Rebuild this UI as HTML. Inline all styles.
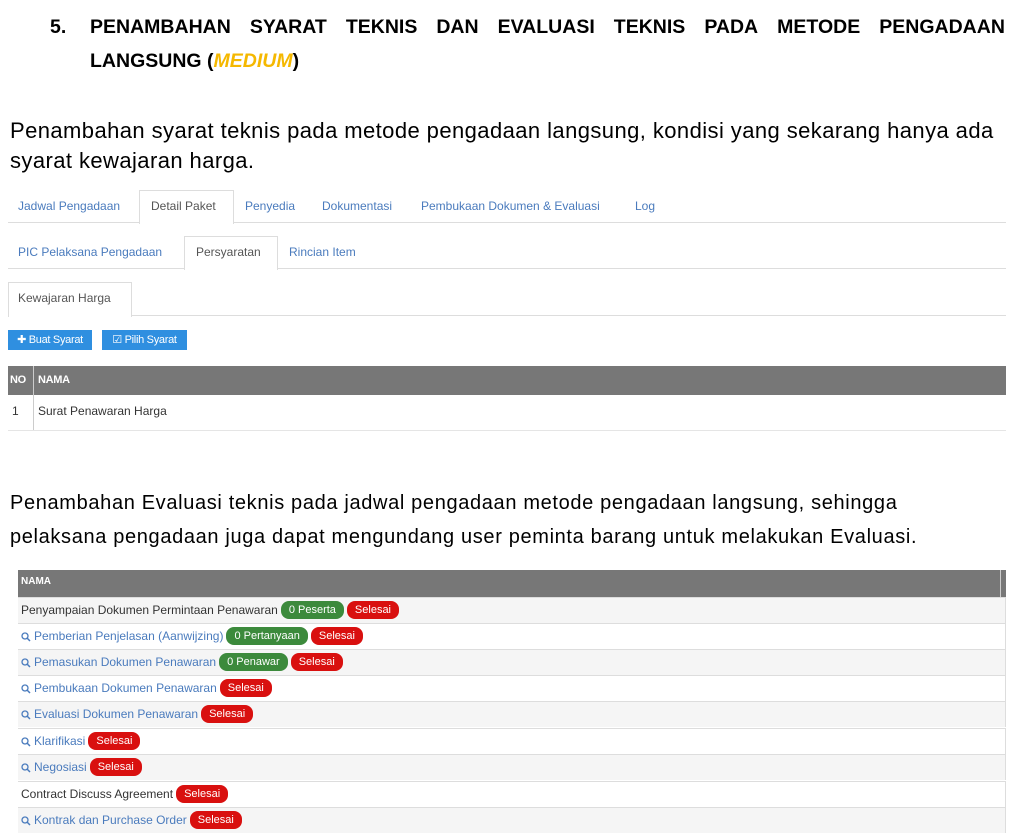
<!DOCTYPE html>
<html><head><meta charset="utf-8"><style>
body{margin:0;width:1016px;height:840px;background:#fff;position:relative;overflow:hidden;font-family:"Liberation Sans",sans-serif;}
.a{position:absolute;white-space:nowrap}
.h{font-weight:bold;font-size:19.5px;color:#000}
.p{font-size:22px;color:#000;letter-spacing:0.42px}
.p2{font-size:20px;color:#000;letter-spacing:0.65px}
.t{font-size:12px;color:#4a7bbd;letter-spacing:0px}
.tab{position:absolute;border:1px solid #ddd;border-bottom:none;background:#fff}
.line{position:absolute;height:1px;background:#ddd}
.lab{display:inline-block;color:#fff;font-size:11px;line-height:14px;border-radius:8px;padding:2px 8px;margin-left:3px;vertical-align:1px}
.r{background:#d9100f}.g{background:#3c8a3c}
.row{position:absolute;left:18px;width:988px;height:26px;border-top:1px solid #ddd;font-size:12px;line-height:25px;color:#333;letter-spacing:0px;white-space:nowrap;padding-left:3px;box-sizing:border-box;border-right:1px solid #ddd}
.row.s{background:#f5f5f5}
.lk{color:#4a7bbd}
.lk svg{vertical-align:-2px;margin-right:3px}
</style></head><body>
<div class="a h" style="left:50px;top:16px">5.</div>
<div class="a h" style="left:90px;top:16px;width:915px;display:flex;justify-content:space-between"><span>PENAMBAHAN</span><span>SYARAT</span><span>TEKNIS</span><span>DAN</span><span>EVALUASI</span><span>TEKNIS</span><span>PADA</span><span>METODE</span><span>PENGADAAN</span></div>
<div class="a h" style="left:90px;top:50px">LANGSUNG (<i style="color:#f5b800">MEDIUM</i>)</div>
<div class="a p" style="left:10px;top:118px">Penambahan syarat teknis pada metode pengadaan langsung, kondisi yang sekarang hanya ada</div>
<div class="a p" style="left:10px;top:148px">syarat kewajaran harga.</div>

<div class="line" style="left:8px;top:222px;width:998px"></div>
<div class="tab" style="left:139px;top:190px;width:93px;height:33px"></div>
<div class="a t" style="left:18px;top:199px">Jadwal Pengadaan</div>
<div class="a t" style="left:151px;top:199px;color:#555">Detail Paket</div>
<div class="a t" style="left:245px;top:199px">Penyedia</div>
<div class="a t" style="left:322px;top:199px">Dokumentasi</div>
<div class="a t" style="left:421px;top:199px">Pembukaan Dokumen &amp; Evaluasi</div>
<div class="a t" style="left:635px;top:199px">Log</div>

<div class="line" style="left:8px;top:268px;width:998px"></div>
<div class="tab" style="left:184px;top:236px;width:92px;height:33px"></div>
<div class="a t" style="left:18px;top:245px">PIC Pelaksana Pengadaan</div>
<div class="a t" style="left:196px;top:245px;color:#555">Persyaratan</div>
<div class="a t" style="left:289px;top:245px">Rincian Item</div>

<div class="line" style="left:8px;top:315px;width:998px"></div>
<div class="tab" style="left:8px;top:282px;width:122px;height:34px"></div>
<div class="a t" style="left:18px;top:291px;color:#555">Kewajaran Harga</div>

<div class="a" style="left:8px;top:330px;width:84px;height:20px;background:#2f8fe0;color:#fff;font-size:11px;line-height:20px;text-align:center;letter-spacing:-0.3px">✚ Buat Syarat</div>
<div class="a" style="left:102px;top:330px;width:85px;height:20px;background:#2f8fe0;color:#fff;font-size:11px;line-height:20px;text-align:center;letter-spacing:-0.3px">☑ Pilih Syarat</div>

<div class="a" style="left:8px;top:366px;width:998px;height:29px;background:#777"></div>
<div class="a" style="left:33px;top:366px;width:1px;height:64px;background:#ccc"></div>
<div class="a" style="left:10px;top:374px;color:#fff;font-size:11px;font-weight:bold;letter-spacing:-0.3px">NO</div>
<div class="a" style="left:38px;top:374px;color:#fff;font-size:11px;font-weight:bold;letter-spacing:-0.3px">NAMA</div>
<div class="a" style="left:12px;top:404px;font-size:12px;color:#333">1</div>
<div class="a" style="left:38px;top:404px;font-size:12px;color:#333">Surat Penawaran Harga</div>
<div class="line" style="left:8px;top:430px;width:998px;background:#e5e5e5"></div>

<div class="a p2" style="left:10px;top:492px">Penambahan Evaluasi teknis pada jadwal pengadaan metode pengadaan langsung, sehingga</div>
<div class="a p2" style="left:10px;top:526px">pelaksana pengadaan juga dapat mengundang user peminta barang untuk melakukan Evaluasi.</div>

<div class="a" style="left:18px;top:570px;width:988px;height:27px;background:#777"></div>
<div class="a" style="left:21px;top:576px;color:#fff;font-size:10px;font-weight:bold">NAMA</div>
<div class="a" style="left:1000px;top:570px;width:1px;height:27px;background:#ccc"></div>
<div class="row s" style="top:597px">Penyampaian Dokumen Permintaan Penawaran<span class="lab g">0 Peserta</span><span class="lab r">Selesai</span></div>
<div class="row" style="top:623px"><span class="lk"><svg width="10" height="10" viewBox="0 0 10 10"><circle cx="4" cy="4" r="3" fill="none" stroke="#4a7bbd" stroke-width="1.3"/><path d="M6 6L9 9" stroke="#4a7bbd" stroke-width="1.5"/></svg>Pemberian Penjelasan (Aanwijzing)</span><span class="lab g">0 Pertanyaan</span><span class="lab r">Selesai</span></div>
<div class="row s" style="top:649px"><span class="lk"><svg width="10" height="10" viewBox="0 0 10 10"><circle cx="4" cy="4" r="3" fill="none" stroke="#4a7bbd" stroke-width="1.3"/><path d="M6 6L9 9" stroke="#4a7bbd" stroke-width="1.5"/></svg>Pemasukan Dokumen Penawaran</span><span class="lab g">0 Penawar</span><span class="lab r">Selesai</span></div>
<div class="row" style="top:675px"><span class="lk"><svg width="10" height="10" viewBox="0 0 10 10"><circle cx="4" cy="4" r="3" fill="none" stroke="#4a7bbd" stroke-width="1.3"/><path d="M6 6L9 9" stroke="#4a7bbd" stroke-width="1.5"/></svg>Pembukaan Dokumen Penawaran</span><span class="lab r">Selesai</span></div>
<div class="row s" style="top:701px"><span class="lk"><svg width="10" height="10" viewBox="0 0 10 10"><circle cx="4" cy="4" r="3" fill="none" stroke="#4a7bbd" stroke-width="1.3"/><path d="M6 6L9 9" stroke="#4a7bbd" stroke-width="1.5"/></svg>Evaluasi Dokumen Penawaran</span><span class="lab r">Selesai</span></div>
<div class="row" style="top:728px"><span class="lk"><svg width="10" height="10" viewBox="0 0 10 10"><circle cx="4" cy="4" r="3" fill="none" stroke="#4a7bbd" stroke-width="1.3"/><path d="M6 6L9 9" stroke="#4a7bbd" stroke-width="1.5"/></svg>Klarifikasi</span><span class="lab r">Selesai</span></div>
<div class="row s" style="top:754px"><span class="lk"><svg width="10" height="10" viewBox="0 0 10 10"><circle cx="4" cy="4" r="3" fill="none" stroke="#4a7bbd" stroke-width="1.3"/><path d="M6 6L9 9" stroke="#4a7bbd" stroke-width="1.5"/></svg>Negosiasi</span><span class="lab r">Selesai</span></div>
<div class="row" style="top:781px">Contract Discuss Agreement<span class="lab r">Selesai</span></div>
<div class="row s" style="top:807px"><span class="lk"><svg width="10" height="10" viewBox="0 0 10 10"><circle cx="4" cy="4" r="3" fill="none" stroke="#4a7bbd" stroke-width="1.3"/><path d="M6 6L9 9" stroke="#4a7bbd" stroke-width="1.5"/></svg>Kontrak dan Purchase Order</span><span class="lab r">Selesai</span></div>
</body></html>
